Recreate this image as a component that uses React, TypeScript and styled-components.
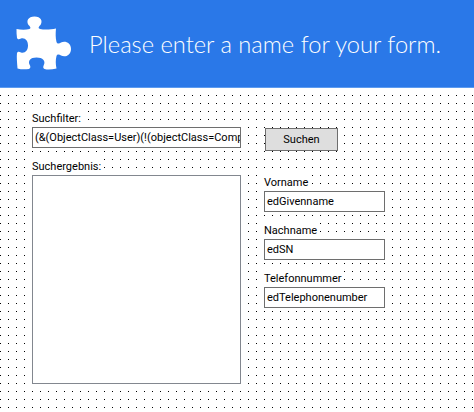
import React from 'react';
import styled, { createGlobalStyle } from 'styled-components';

const GlobalStyle = createGlobalStyle`
  html, body {
    margin: 0;
    padding: 0;
    background: #fff;
  }
`;

const Page = styled.div`
  width: 474px;
  height: 412px;
  overflow: hidden;
  font-family: Roboto, sans-serif;
  font-size: 11px;
  color: #000;
`;

const Banner = styled.header`
  height: 88px;
  box-sizing: border-box;
  display: flex;
  align-items: center;
  gap: 17px;
  padding: 0 0 0 16px;
  background: #2a78e8;
  border-bottom: 1px solid #5c9bf0;
`;

const BannerTitle = styled.h1`
  margin: 0;
  font-family: Lato, sans-serif;
  font-weight: 300;
  font-size: 23.7px;
  color: #fff;
  white-space: nowrap;
`;

const Canvas = styled.main`
  height: 324px;
  box-sizing: border-box;
  padding: 23px 0 0 32px;
  background-color: #fff;
  background-image: radial-gradient(circle at 0.5px 0.5px, #000 0.6px, transparent 0.6px);
  background-size: 8px 8px;
  background-position: 0 7px;
  display: grid;
  grid-template-columns: 209px 121px;
  column-gap: 23px;
`;

const Column = styled.div`
  display: flex;
  flex-direction: column;
`;

const Label = styled.label<{ $gap?: number }>`
  display: block;
  width: fit-content;
  height: 15px;
  line-height: 15px;
  margin-top: ${p => p.$gap ?? 0}px;
  margin-bottom: 1px;
  background: #fff;
  white-space: nowrap;
`;

const Field = styled.div`
  box-sizing: border-box;
  height: 21px;
  line-height: 19px;
  padding: 0 2px;
  border: 1px solid #6e6e6e;
  background: #fff;
  overflow: hidden;
  white-space: nowrap;
`;

const ResultList = styled.div`
  box-sizing: border-box;
  width: 209px;
  height: 209px;
  border: 1px solid #82878f;
  background: #fff;
`;

const Button = styled.button`
  box-sizing: border-box;
  width: 73px;
  height: 23px;
  margin: 17px 0 0 1px;
  padding: 0;
  border: 1px solid #6e6e6e;
  background: #dedede;
  font: inherit;
  color: inherit;
`;

const PuzzleIcon = () => (
  <svg width="56" height="56" viewBox="0 0 56 56" aria-hidden="true">
    <path
      fill="#fff"
      d="M0.5 13 C5 14 10 14 13.5 13 C15.5 12 14 10.5 12.5 9 C10 5 12 0.5 18.5 0.5 C25 0.5 27 5 24.5 9 C23 10.5 21.5 12 24 13 C29 14 35 13.5 40 12.5 C39.5 17 39.5 22 40.5 26 C41.5 28.5 43.5 27.5 45 26.5 C48.5 24.5 55 26 55 33 C55 40 48.5 41.5 45 39.5 C43.5 38.5 41.5 37.5 40.5 40 C39.5 44 39.5 48 40.5 52.5 C36 53.5 32 54 28.5 53 C26.5 52 27.5 50 28 48.5 C29.5 45 27 41.5 20.5 41.5 C14 41.5 12 45 13.5 48.5 C14.5 50 15 52 13 53 C9 53.5 5 53.5 1.5 52.5 C1 46 0.5 41 1 37 C2 35 3.5 36 5 36.5 C9 37.5 12 34.5 12 29.5 C12 24.5 9 21.5 5 22.5 C3.5 23 2 24 1 22 C0.5 19 0.5 16 0.5 13 Z"
    />
  </svg>
);

export default function App() {
  return (
    <Page>
      <GlobalStyle />
      <Banner>
        <PuzzleIcon />
        <BannerTitle>Please enter a name for your form.</BannerTitle>
      </Banner>
      <Canvas>
        <Column>
          <Label>Suchfilter:</Label>
          <Field>(&amp;(ObjectClass=User)(!(objectClass=Comp</Field>
          <Label $gap={11}>Suchergebnis:</Label>
          <ResultList />
        </Column>
        <Column>
          <Button>Suchen</Button>
          <Label $gap={24}>Vorname</Label>
          <Field>edGivenname</Field>
          <Label $gap={11}>Nachname</Label>
          <Field>edSN</Field>
          <Label $gap={11}>Telefonnummer</Label>
          <Field>edTelephonenumber</Field>
        </Column>
      </Canvas>
    </Page>
  );
}
